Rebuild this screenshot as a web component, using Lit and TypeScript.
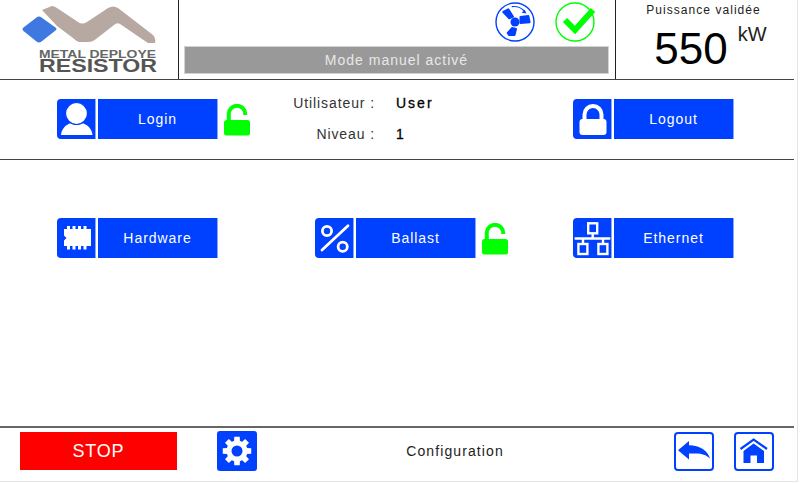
import { LitElement, html, css, svg } from "lit";
import { customElement } from "lit/decorators.js";

const gearPath = (() => {
  const cx = 20, cy = 20, teeth = 8;
  let d = "";
  for (let i = 0; i < teeth; i++) {
    const a = (i * Math.PI * 2) / teeth;
    const pts: [number, number][] = [
      [10, a - 0.3], [14.5, a - 0.19], [14.5, a + 0.19], [10, a + 0.3],
    ];
    for (const [r, t] of pts) {
      d += `${d ? "L" : "M"}${(cx + r * Math.sin(t)).toFixed(2)} ${(cy - r * Math.cos(t)).toFixed(2)}`;
    }
  }
  return d + "Z";
})();

const icons = {
  user: svg`<path d="M4 36C4.500 30 9 25.500 14 24c3 1.800 8 1.800 11 0 5.500 1.500 10 6 10.500 12z" fill="#fff"/><circle cx="19.500" cy="14.500" r="11" fill="#fff" stroke="#0040ff" stroke-width="1.200"/>`,
  lock: svg`<path d="M11.500 22v-6.500a8.500 8.500 0 0 1 17 0V22" fill="none" stroke="#fff" stroke-width="4"/><rect x="6.500" y="20" width="27" height="16" rx="3" fill="#fff"/>`,
  chip: svg`<g fill="#fff"><path d="M7 11h27v17H7v-5.500l2.500-2.500L7 17.500z"/><path d="M10 8h3v3h-3zM15.500 8h3v3h-3zM21 8h3v3h-3zM26.500 8h3v3h-3zM10 28h3v3.500h-3zM15.500 28h3v3.500h-3zM21 28h3v3.500h-3zM26.500 28h3v3.500h-3z"/></g>`,
  percent: svg`<g fill="none" stroke="#fff" stroke-width="2.800"><circle cx="12" cy="13" r="4.600"/><circle cx="27.700" cy="28.700" r="4.600"/><path d="M33 7.700 7 32" stroke-linecap="round"/></g>`,
  net: svg`<g fill="none" stroke="#fff" stroke-width="2.400"><rect x="15.200" y="5.300" width="9" height="10"/><rect x="5.400" y="26" width="9" height="10"/><rect x="25.400" y="26" width="9" height="10"/><path d="M19.700 15.300v5M1.600 20.500H37.300M10 20.500V26M30 20.500V26"/></g>`,
  gear: svg`<path fill-rule="evenodd" d="${gearPath} M20 14a6 6 0 1 0 .01 0z" fill="#fff"/><circle cx="20" cy="20" r="10.500" fill="#fff"/><circle cx="20" cy="20" r="5.500" fill="#0040ff"/>`,
};

const openLock = html`<svg class="open" width="28" height="32" viewBox="0 0 28 32">
  <path d="M5.800 16v-6a8.200 8.200 0 0 1 16.400 0v1" fill="none" stroke="#00ff00" stroke-width="4"/>
  <rect x="1" y="16" width="26" height="15.500" rx="2.500" fill="#00ff00"/>
</svg>`;

@customElement("app-root")
export class AppRoot extends LitElement {
  static styles = css`
    :host {
      display: block;
      width: 800px;
      height: 483px;
      background: #fff;
      font-family: "Liberation Sans", Arial, sans-serif;
      color: #222;
      overflow: hidden;
    }
    .frame {
      width: 798px;
      height: 482px;
      box-sizing: border-box;
      border-right: 1px solid #e4e4e4;
      border-bottom: 1px solid #e4e4e4;
      display: flex;
      flex-direction: column;
    }
    .inner { width: 794px; display: flex; flex-direction: column; flex: 1; }
    header {
      height: 80px;
      box-sizing: border-box;
      border-bottom: 1px solid #444;
      display: flex;
    }
    .logo {
      width: 179px;
      box-sizing: border-box;
      border-right: 1px solid #222;
      display: flex;
    }
    .logo svg { display: block; }
    .logo text { font-family: "Liberation Sans", Arial, sans-serif; font-weight: 700; }
    .mid {
      width: 437px;
      box-sizing: border-box;
      border-right: 1px solid #222;
      padding: 2px 6px 0 5px;
      display: flex;
      flex-direction: column;
    }
    .status {
      display: flex;
      justify-content: flex-end;
      gap: 20px;
      padding-right: 14px;
      height: 44px;
    }
    .status svg { display: block; }
    .mode {
      height: 28px;
      background: #999;
      border: 1px solid #d2d2d2;
      box-sizing: border-box;
      color: #e8e8e8;
      font-size: 14px;
      letter-spacing: 1px;
      display: flex;
      align-items: center;
      justify-content: center;
    }
    .power { flex: 1; display: flex; flex-direction: column; align-items: center; padding-top: 3px; }
    .power .title { font-size: 12px; letter-spacing: 1.05px; line-height: 14px; color: #222; padding-right: 3px; }
    .value { display: flex; align-items: flex-start; margin-top: 7px; padding-left: 11px; color: #000; }
    .num { font-size: 44px; line-height: 50px; }
    .unit { font-size: 20px; line-height: 20px; margin: 0 0 0 10px; color: #222; }

    .grid {
      display: grid;
      grid-template-columns: 258px 258px 1fr;
      padding-left: 57px;
      box-sizing: border-box;
    }
    .login {
      height: 80px;
      border-bottom: 1px solid #444;
      padding-top: 19px;
      align-items: start;
    }
    .cell { display: flex; align-items: center; gap: 5px; }
    .btn { display: flex; gap: 2px; height: 40px; color: #fff; font-size: 14px; letter-spacing: 0.95px; }
    .ic {
      width: 39px;
      height: 40px;
      box-sizing: border-box;
      background: #0040ff;
      border-radius: 4px 0 0 4px;
      border-right: 1px solid #8aa6ff;
    }
    .ic svg { display: block; }
    .lbl {
      width: 120px;
      box-sizing: border-box;
      background: #0040ff;
      border-right: 1px solid #8aa6ff;
      display: flex;
      align-items: center;
      justify-content: center;
    }
    .open { display: block; margin-top: 2px; }
    .info {
      position: relative;
      display: grid;
      grid-template-columns: 134px auto;
      column-gap: 21px;
      row-gap: 15px;
      margin-left: -74px;
      margin-top: -4px;
      font-size: 14px;
      letter-spacing: 0.9px;
      line-height: 16px;
      height: 47px;
    }
    .info .k { text-align: right; color: #333; }
    .info .v { color: #000; -webkit-text-stroke: 0.3px #000; letter-spacing: 2px; }
    .cfg { padding-top: 58px; flex: 1; align-items: start; }

    footer {
      height: 55px;
      box-sizing: border-box;
      border-top: 2px solid #666;
      display: flex;
      align-items: flex-start;
      padding: 4px 20px 0 20px;
    }
    .stop {
      width: 157px;
      height: 38px;
      background: #ff0000;
      color: #fff;
      font-size: 18px;
      letter-spacing: 0.8px;
      display: flex;
      align-items: center;
      justify-content: center;
    }
    .gear { width: 40px; height: 40px; margin: -1px 0 0 40px; background: #0040ff; border-radius: 3px; }
    .gear svg, .nav svg { display: block; }
    .title2 {
      flex: 1;
      text-align: center;
      font-size: 14px;
      letter-spacing: 1.1px;
      line-height: 38px;
      color: #222;
      padding-right: 21px;
    }
    .nav { display: flex; gap: 20px; }
    .nbtn { width: 40px; height: 39px; box-sizing: border-box; border: 2px solid #0040ff; border-radius: 4px; background: #fff; }
  `;

  private btn(icon: unknown, label: string) {
    return html`<div class="btn">
      <div class="ic"><svg width="39" height="40" viewBox="0 0 39 40">${icon}</svg></div>
      <div class="lbl">${label}</div>
    </div>`;
  }

  render() {
    return html`<div class="frame"><div class="inner">
      <header>
        <div class="logo">
          <svg width="178" height="79" viewBox="0 0 178 79">
            <path d="M42 10 52 6Q54 6 57 8L78 22Q82 25 87 22L108 8Q113 5 118 8L153 35Q156 38 155 43L148 43Q145 41 142 39L120 24Q117 22 114 25L96 39Q93 42 88 42L79 42Q76 41 73 38L57 26Z" fill="#b8a8a2"/>
            <path d="M36.500 17.500Q39 15.500 41.500 17.500L55.500 27.500Q57.500 29 55.500 30.500L41.500 41.500Q39 43.500 36.500 41.500L23.500 31Q21.500 29 23.500 27.500Z" fill="#3f78e0"/>
            <text x="39" y="57.500" font-size="11" fill="#666" textLength="117" lengthAdjust="spacingAndGlyphs">METAL DEPLOYE</text>
            <text x="39" y="72" font-size="18" fill="#555" textLength="118" lengthAdjust="spacingAndGlyphs">RESISTOR</text>
          </svg>
        </div>
        <div class="mid">
          <div class="status">
            <svg width="40" height="40" viewBox="0 0 40 40">
              <circle cx="20" cy="20" r="19" fill="#fff" stroke="#0040ff" stroke-width="1.400"/>
              <g fill="#0040ff" stroke="#0040ff" stroke-width="2" stroke-linejoin="round">
                <path d="M8.300 10 13.300 7.300 18 14.700 14.300 16.300z"/>
                <path d="M25.500 15 33.300 14 34.600 20.300 25.500 21z"/>
                <path d="M17.200 26 21 27 19.500 33 14 33 12.700 31z"/>
              </g>
              <circle cx="20" cy="20" r="4.500" fill="#0040ff"/>
              <path d="M16.700 4.700Q24 3.500 29.500 9" fill="none" stroke="#0040ff" stroke-width="1.200"/>
              <path d="M31.500 11.500l-4.800-.8 3-3z" fill="#0040ff"/>
            </svg>
            <svg width="40" height="40" viewBox="0 0 40 40">
              <circle cx="20" cy="20" r="19" fill="#fff" stroke="#00ff00" stroke-width="1.400"/>
              <path d="M10 18l10 10L38 8" fill="none" stroke="#00ff00" stroke-width="6"/>
            </svg>
          </div>
          <div class="mode">Mode manuel activé</div>
        </div>
        <div class="power">
          <div class="title">Puissance validée</div>
          <div class="value"><span class="num">550</span><span class="unit">kW</span></div>
        </div>
      </header>

      <section class="grid login">
        <div class="cell">${this.btn(icons.user, "Login")}${openLock}</div>
        <div class="info">
          <span class="k">Utilisateur :</span><span class="v">User</span>
          <span class="k">Niveau :</span><span class="v">1</span>
        </div>
        <div class="cell">${this.btn(icons.lock, "Logout")}</div>
      </section>

      <section class="grid cfg">
        <div class="cell">${this.btn(icons.chip, "Hardware")}</div>
        <div class="cell">${this.btn(icons.percent, "Ballast")}${openLock}</div>
        <div class="cell">${this.btn(icons.net, "Ethernet")}</div>
      </section>

      <footer>
        <div class="stop">STOP</div>
        <div class="gear"><svg width="40" height="40" viewBox="0 0 40 40">${icons.gear}</svg></div>
        <div class="title2">Configuration</div>
        <div class="nav">
          <div class="nbtn"><svg width="36" height="35" viewBox="0 0 36 35">
            <path d="M2 16.300 13 7V11.300C24 11.300 32 17 34 24.600 30 21 26 19.600 20 19.600H13V25.600Z" fill="#0040ff"/>
          </svg></div>
          <div class="nbtn"><svg width="36" height="35" viewBox="0 0 36 35">
            <path d="M4.500 15 17.600 5.500 31 15" fill="none" stroke="#0040ff" stroke-width="2.200"/>
            <path d="M17.600 9.500 28 17V29H21V21.500H14.500V29H7.500V17Z" fill="#0040ff"/>
          </svg></div>
        </div>
      </footer>
    </div></div>`;
  }
}
